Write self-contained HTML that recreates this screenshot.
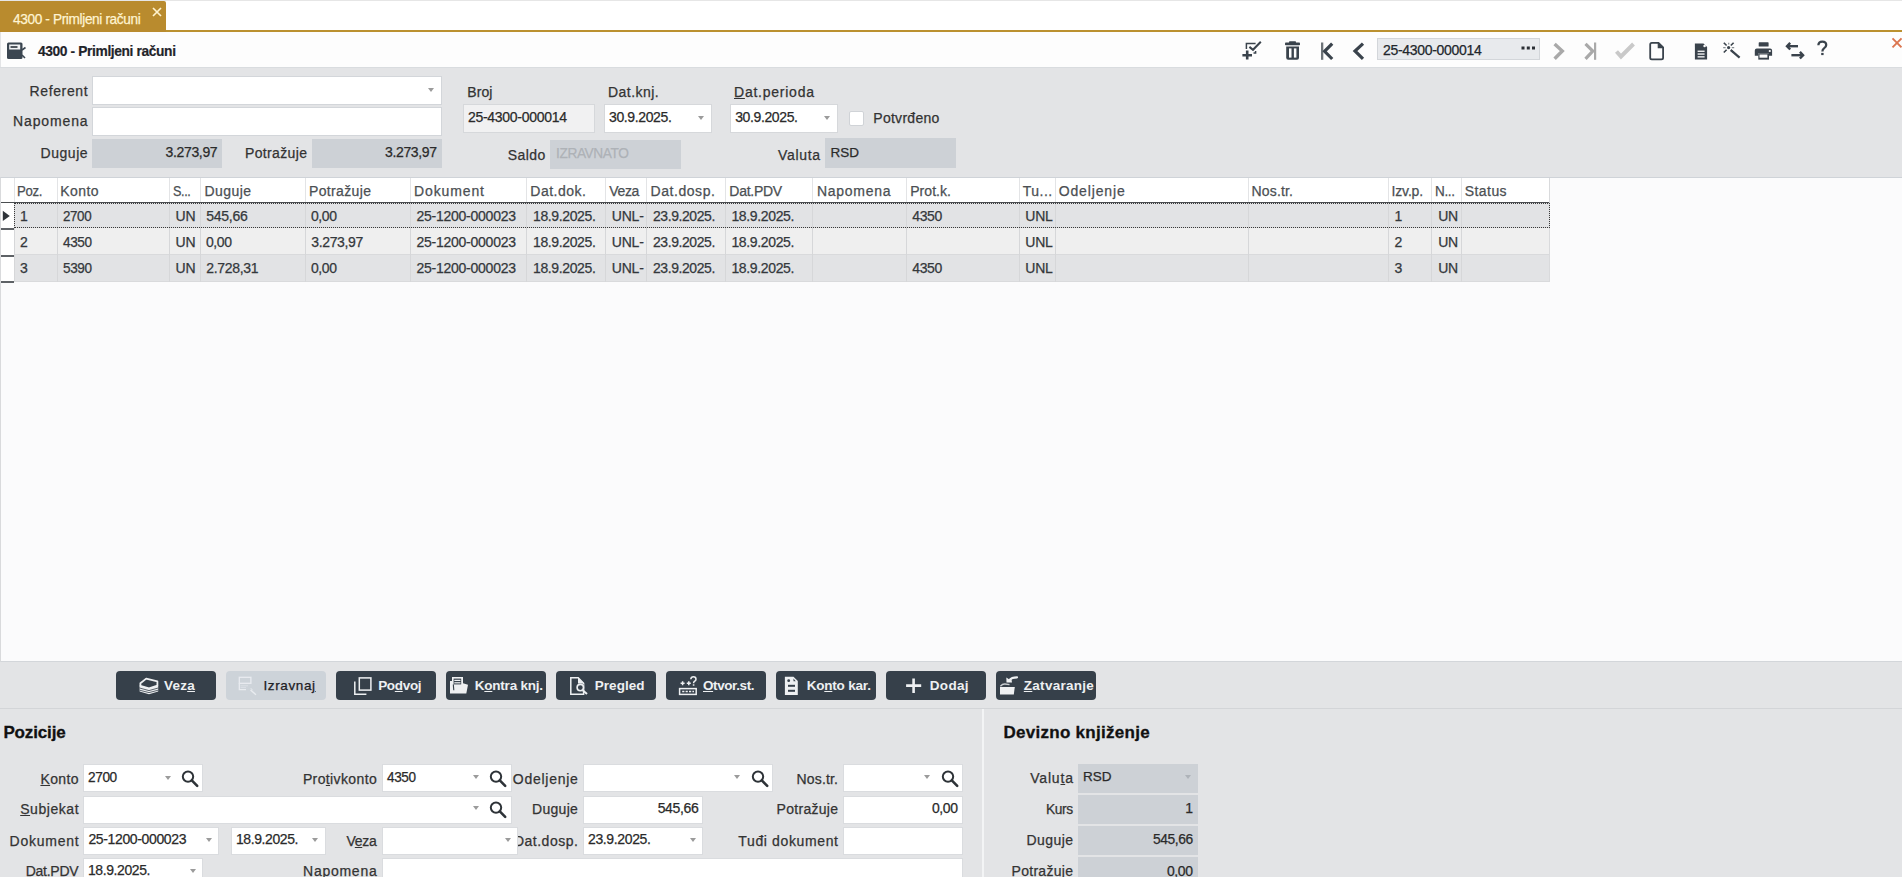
<!DOCTYPE html>
<html><head><meta charset="utf-8">
<style>
*{box-sizing:border-box;margin:0;padding:0}
html,body{width:1902px;height:877px;overflow:hidden}
body{background:#e3e4e6;font-family:"Liberation Sans",sans-serif;color:#333;position:relative}
.a{position:absolute}
.t{position:absolute;white-space:nowrap;line-height:1;font-family:"Liberation Sans",sans-serif;-webkit-text-stroke:0.25px currentColor}
svg{position:absolute;overflow:visible}
</style></head><body>
<div class="a" style="left:0px;top:0px;width:1902px;height:30px;background:#ffffff;border-top:1px solid #e6e6e6"></div>
<div class="a" style="left:0px;top:30px;width:1902px;height:2px;background:#bb9130;"></div>
<div class="a" style="left:0px;top:1px;width:166px;height:31px;background:#b98b2e;border-radius:0 2px 0 0"></div>
<svg style="left:152px;top:6.5px;" width="10" height="10" viewBox="0 0 10 10"><path d="M1 1L9 9M9 1L1 9" stroke="#fff2cc" stroke-width="1.7"/></svg>
<div class="a" style="left:1px;top:32px;width:1901px;height:35px;background:#fdfdfd;"></div>
<div class="a" style="left:0px;top:32px;width:1px;height:35px;background:#e3e4e6;"></div>
<div class="a" style="left:0px;top:67px;width:1902px;height:1px;background:#d9dcdf;"></div>
<svg style="left:6px;top:41px;" width="21" height="19" viewBox="0 0 21 19"><rect x="1" y="1.5" width="15.5" height="16.5" rx="1.5" fill="#3b4651"/><rect x="3.2" y="3.5" width="11" height="5" fill="#f2f4f6"/><rect x="4.5" y="5.2" width="7" height="1.6" fill="#2a323a"/><path d="M16 9L19.5 6.5M16 14L19 17" stroke="#3b4651" stroke-width="1.6"/></svg>
<svg style="left:1240px;top:40px;" width="24" height="21" viewBox="0 0 24 21"><path d="M2.4 15.2H12M7.2 10.6V19.4" stroke="#3a434c" stroke-width="2.6"/><path d="M6.4 9V3.6H15.6" fill="none" stroke="#3a434c" stroke-width="1.5"/><path d="M15.6 11V13.1H13.5" fill="none" stroke="#3a434c" stroke-width="1.5"/><path d="M9.4 6.9L13 9.8L20.8 1.7" fill="none" stroke="#3a434c" stroke-width="2"/></svg>
<svg style="left:1284px;top:40px;" width="17" height="21" viewBox="0 0 17 21"><rect x="1" y="2.6" width="15" height="2.6" rx="0.8" fill="#3a434c"/><rect x="5" y="1.3" width="7" height="2" rx="0.8" fill="#3a434c"/><path d="M2.2 6.5H15V17.8Q15 19.8 13 19.8H4.2Q2.2 19.8 2.2 17.8Z" fill="#3a434c"/><rect x="5" y="8.4" width="2.5" height="9.2" fill="#fdfdfd"/><rect x="9.9" y="8.4" width="2.5" height="9.2" fill="#fdfdfd"/></svg>
<svg style="left:1318px;top:40px;" width="18" height="22" viewBox="0 0 18 22"><rect x="3" y="2.5" width="2.3" height="17.3" fill="#6d7378"/><path d="M14.2 3.6L6.6 11.3L14.2 19" fill="none" stroke="#3a434c" stroke-width="3.2"/></svg>
<svg style="left:1350px;top:40px;" width="16" height="22" viewBox="0 0 16 22"><path d="M13 3.6L5 11L13 18.8" fill="none" stroke="#3a434c" stroke-width="3.2"/></svg>
<div class="a" style="left:1377px;top:38px;width:163px;height:22px;background:#e8eaed;border:1px solid #d3d6da"></div>
<svg style="left:1521px;top:46px;" width="15" height="4" viewBox="0 0 15 4"><rect x="0.5" y="0.5" width="3" height="3" fill="#2a2f35"/><rect x="5.8" y="0.5" width="3" height="3" fill="#2a2f35"/><rect x="11" y="0.5" width="3" height="3" fill="#2a2f35"/></svg>
<svg style="left:1550px;top:40px;" width="16" height="22" viewBox="0 0 16 22"><path d="M4.6 3.9L12.3 11L4.6 18.8" fill="none" stroke="#a9a9a9" stroke-width="3.4"/></svg>
<svg style="left:1580px;top:40px;" width="18" height="22" viewBox="0 0 18 22"><path d="M5.5 3.9L12.8 11L5.5 18.8" fill="none" stroke="#a9a9a9" stroke-width="3.2"/><rect x="14" y="2.5" width="2.2" height="17.3" fill="#a9a9a9"/></svg>
<svg style="left:1612px;top:40px;" width="24" height="20" viewBox="0 0 24 20"><path d="M4.5 11.5L9 16.5L21.5 4" fill="none" stroke="#c9c9c9" stroke-width="4"/></svg>
<svg style="left:1647px;top:40px;" width="19" height="21" viewBox="0 0 19 21"><path d="M3.2 4.4Q3.2 2.8 4.8 2.8H11.5L16.1 7.4V17.8Q16.1 19.4 14.5 19.4H4.8Q3.2 19.4 3.2 17.8Z" fill="none" stroke="#3a434c" stroke-width="1.8"/><path d="M11.3 2.8V7.6H16" fill="#3a434c" stroke="#3a434c" stroke-width="1.2"/></svg>
<svg style="left:1693px;top:40px;" width="16" height="21" viewBox="0 0 16 21"><path d="M1.9 3.5H10.5L14.1 7.1V19.6H1.9Z" fill="#3a434c"/><circle cx="11.6" cy="6" r="1.3" fill="#fdfdfd"/><rect x="4.6" y="10.6" width="7" height="1.3" fill="#fdfdfd"/><rect x="4.6" y="13.4" width="7" height="1.3" fill="#fdfdfd"/><rect x="4.6" y="16.2" width="7" height="1.3" fill="#fdfdfd"/></svg>
<svg style="left:1720px;top:40px;" width="22" height="20" viewBox="0 0 22 20"><path d="M10.8 10.2L19.6 17.7" stroke="#3a434c" stroke-width="2.2"/><path d="M3.8 2.7L6.6 5.5M10.8 9.7L13.6 12.5M13.6 2.7L10.8 5.5M6.6 9.7L3.8 12.5" stroke="#3a434c" stroke-width="1.6"/><path d="M3.2 7.6H5.6M11.8 7.6H14.2M8.7 2.8V4.6" stroke="#3a434c" stroke-width="1.2" opacity="0.6"/><circle cx="8.6" cy="7.6" r="1.6" fill="#3a434c"/></svg>
<svg style="left:1753px;top:40px;" width="21" height="21" viewBox="0 0 21 21"><rect x="5.7" y="2.3" width="9.9" height="4.3" rx="0.6" fill="#3a434c"/><path d="M1.8 10.6Q1.8 8.6 3.8 8.6H17.1Q19.1 8.6 19.1 10.6V15.7H15.9V13.3H5.3V15.7H1.8Z" fill="#3a434c"/><circle cx="16.8" cy="11" r="1.1" fill="#fdfdfd"/><rect x="5.3" y="13.3" width="10.7" height="6.3" fill="#3a434c"/><rect x="6.5" y="14.5" width="7.9" height="3.2" fill="#fdfdfd"/></svg>
<svg style="left:1784px;top:40px;" width="22" height="20" viewBox="0 0 22 20"><path d="M3.4 6.2H14" stroke="#3a434c" stroke-width="2.4"/><path d="M6.2 2.9L3 6.2L6.2 9.5" fill="none" stroke="#3a434c" stroke-width="2.4"/><path d="M7.4 15.2H18.6" stroke="#3a434c" stroke-width="2.4"/><path d="M15.9 11.9L19.1 15.2L15.9 18.5" fill="none" stroke="#3a434c" stroke-width="2.4"/></svg>
<svg style="left:1815px;top:39px;" width="14" height="18" viewBox="0 0 14 18"><path d="M3.4 6.2Q3.4 2.6 7.3 2.6Q11.2 2.6 11.2 6Q11.2 8 9 9.4Q7.4 10.4 7.4 12.6" fill="none" stroke="#3a434c" stroke-width="2.3"/><rect x="6.2" y="13.9" width="2.4" height="2.2" fill="#3a434c"/></svg>
<svg style="left:1891px;top:37px;" width="11" height="11" viewBox="0 0 11 11"><path d="M1.5 1.3L10.5 10.3M10.5 1.3L1.5 10.3" stroke="#db7650" stroke-width="1.9"/></svg>
<div class="a" style="left:92px;top:76px;width:350px;height:29px;background:#fff;border:1px solid #d3d6da"></div>
<svg style="left:428.4px;top:88px;" width="6" height="4" viewBox="0 0 6 4"><path d="M0 0H6L3 4Z" fill="#9b9b9b"/></svg>
<div class="a" style="left:92px;top:107px;width:350px;height:29px;background:#fff;border:1px solid #d3d6da"></div>
<div class="a" style="left:92px;top:139px;width:130px;height:29px;background:#cdd1d6;"></div>
<div class="a" style="left:312px;top:139px;width:130px;height:29px;background:#cdd1d6;"></div>
<div class="a" style="left:463px;top:104px;width:132px;height:29px;background:#f1f1f2;border:1px solid #d6d8db"></div>
<div class="a" style="left:604px;top:104px;width:108px;height:29px;background:#fff;border:1px solid #d6d8db"></div>
<svg style="left:698px;top:116px;" width="6" height="4" viewBox="0 0 6 4"><path d="M0 0H6L3 4Z" fill="#9b9b9b"/></svg>
<div class="a" style="left:730px;top:104px;width:108px;height:29px;background:#fff;border:1px solid #d6d8db"></div>
<svg style="left:824.4px;top:116px;" width="6" height="4" viewBox="0 0 6 4"><path d="M0 0H6L3 4Z" fill="#9b9b9b"/></svg>
<div class="a" style="left:849px;top:111px;width:15px;height:15px;background:#fff;border:1px solid #d0d3d7;border-radius:2px"></div>
<div class="a" style="left:550px;top:140px;width:131px;height:29px;background:#cdd1d6;"></div>
<div class="a" style="left:825px;top:138px;width:131px;height:30px;background:#cdd1d6;"></div>
<div class="a" style="left:0px;top:177px;width:1902px;height:485px;background:#fbfbfc;border-left:1px solid #d9dadc;border-top:1px solid #cfd3d8;border-bottom:1px solid #d3d6da"></div>
<div class="a" style="left:1px;top:178px;width:1549px;height:24px;background:#ffffff;"></div>
<div class="a" style="left:14px;top:203px;width:1536px;height:25px;background:#e2e3e5;"></div>
<div class="a" style="left:14px;top:227px;width:1536px;height:1px;background:#d9dadc;"></div>
<div class="a" style="left:14px;top:228px;width:1536px;height:27px;background:#efefef;"></div>
<div class="a" style="left:14px;top:254px;width:1536px;height:1px;background:#d9dadc;"></div>
<div class="a" style="left:14px;top:255px;width:1536px;height:27px;background:#e2e3e5;"></div>
<div class="a" style="left:14px;top:281px;width:1536px;height:1px;background:#d9dadc;"></div>
<div class="a" style="left:1px;top:203px;width:13px;height:79px;background:#ffffff;"></div>
<div class="a" style="left:1px;top:228px;width:13px;height:2px;background:#5e6266;"></div>
<div class="a" style="left:1px;top:255px;width:13px;height:2px;background:#5e6266;"></div>
<div class="a" style="left:1px;top:281px;width:13px;height:2px;background:#5e6266;"></div>
<svg style="left:2px;top:210px;" width="9" height="12" viewBox="0 0 9 12"><path d="M0.8 0.8L7.8 5.9L0.8 11Z" fill="#2f3439"/></svg>
<div class="a" style="left:1px;top:202px;width:1549px;height:1px;background:#4a4d50;"></div>
<div class="a" style="left:14px;top:178px;width:1px;height:24px;background:#e3e4e6;"></div>
<div class="a" style="left:14px;top:203px;width:1px;height:79px;background:#d6d7d9;"></div>
<div class="a" style="left:57px;top:178px;width:1px;height:24px;background:#e3e4e6;"></div>
<div class="a" style="left:57px;top:203px;width:1px;height:79px;background:#d6d7d9;"></div>
<div class="a" style="left:169px;top:178px;width:1px;height:24px;background:#e3e4e6;"></div>
<div class="a" style="left:169px;top:203px;width:1px;height:79px;background:#d6d7d9;"></div>
<div class="a" style="left:200px;top:178px;width:1px;height:24px;background:#e3e4e6;"></div>
<div class="a" style="left:200px;top:203px;width:1px;height:79px;background:#d6d7d9;"></div>
<div class="a" style="left:305px;top:178px;width:1px;height:24px;background:#e3e4e6;"></div>
<div class="a" style="left:305px;top:203px;width:1px;height:79px;background:#d6d7d9;"></div>
<div class="a" style="left:410px;top:178px;width:1px;height:24px;background:#e3e4e6;"></div>
<div class="a" style="left:410px;top:203px;width:1px;height:79px;background:#d6d7d9;"></div>
<div class="a" style="left:526px;top:178px;width:1px;height:24px;background:#e3e4e6;"></div>
<div class="a" style="left:526px;top:203px;width:1px;height:79px;background:#d6d7d9;"></div>
<div class="a" style="left:605px;top:178px;width:1px;height:24px;background:#e3e4e6;"></div>
<div class="a" style="left:605px;top:203px;width:1px;height:79px;background:#d6d7d9;"></div>
<div class="a" style="left:646px;top:178px;width:1px;height:24px;background:#e3e4e6;"></div>
<div class="a" style="left:646px;top:203px;width:1px;height:79px;background:#d6d7d9;"></div>
<div class="a" style="left:725px;top:178px;width:1px;height:24px;background:#e3e4e6;"></div>
<div class="a" style="left:725px;top:203px;width:1px;height:79px;background:#d6d7d9;"></div>
<div class="a" style="left:812px;top:178px;width:1px;height:24px;background:#e3e4e6;"></div>
<div class="a" style="left:812px;top:203px;width:1px;height:79px;background:#d6d7d9;"></div>
<div class="a" style="left:906px;top:178px;width:1px;height:24px;background:#e3e4e6;"></div>
<div class="a" style="left:906px;top:203px;width:1px;height:79px;background:#d6d7d9;"></div>
<div class="a" style="left:1019px;top:178px;width:1px;height:24px;background:#e3e4e6;"></div>
<div class="a" style="left:1019px;top:203px;width:1px;height:79px;background:#d6d7d9;"></div>
<div class="a" style="left:1055px;top:178px;width:1px;height:24px;background:#e3e4e6;"></div>
<div class="a" style="left:1055px;top:203px;width:1px;height:79px;background:#d6d7d9;"></div>
<div class="a" style="left:1248px;top:178px;width:1px;height:24px;background:#e3e4e6;"></div>
<div class="a" style="left:1248px;top:203px;width:1px;height:79px;background:#d6d7d9;"></div>
<div class="a" style="left:1388px;top:178px;width:1px;height:24px;background:#e3e4e6;"></div>
<div class="a" style="left:1388px;top:203px;width:1px;height:79px;background:#d6d7d9;"></div>
<div class="a" style="left:1431px;top:178px;width:1px;height:24px;background:#e3e4e6;"></div>
<div class="a" style="left:1431px;top:203px;width:1px;height:79px;background:#d6d7d9;"></div>
<div class="a" style="left:1461px;top:178px;width:1px;height:24px;background:#e3e4e6;"></div>
<div class="a" style="left:1461px;top:203px;width:1px;height:79px;background:#d6d7d9;"></div>
<div class="a" style="left:1549px;top:178px;width:1px;height:104px;background:#d9dadc;"></div>
<div class="a" style="left:14px;top:203px;width:1536px;height:25px;border:1px dotted #3a3a3a"></div>
<div class="a" style="left:116px;top:671px;width:100px;height:29px;background:#36404a;border-radius:4px"></div>
<div class="a" style="left:226px;top:671px;width:100px;height:29px;background:#cdd3d9;border-radius:4px"></div>
<div class="a" style="left:336px;top:671px;width:100px;height:29px;background:#36404a;border-radius:4px"></div>
<div class="a" style="left:446px;top:671px;width:100px;height:29px;background:#36404a;border-radius:4px"></div>
<div class="a" style="left:556px;top:671px;width:100px;height:29px;background:#36404a;border-radius:4px"></div>
<div class="a" style="left:666px;top:671px;width:100px;height:29px;background:#36404a;border-radius:4px"></div>
<div class="a" style="left:776px;top:671px;width:100px;height:29px;background:#36404a;border-radius:4px"></div>
<div class="a" style="left:886px;top:671px;width:100px;height:29px;background:#36404a;border-radius:4px"></div>
<div class="a" style="left:996px;top:671px;width:100px;height:29px;background:#36404a;border-radius:4px"></div>
<div class="a" style="left:0px;top:708px;width:1902px;height:1px;background:#d3d5d8;"></div>
<div class="a" style="left:982px;top:709px;width:2px;height:168px;background:#f3f4f5;"></div>
<div class="a" style="left:83px;top:764px;width:120px;height:28px;background:#fff;border:1px solid #dadcdf"></div>
<svg style="left:164.7px;top:776px;" width="6" height="4" viewBox="0 0 6 4"><path d="M0 0H6L3 4Z" fill="#9b9b9b"/></svg>
<svg style="left:181px;top:770px;" width="18" height="17" viewBox="0 0 18 17"><circle cx="7" cy="6.6" r="5.2" fill="none" stroke="#2e3338" stroke-width="2"/><path d="M10.8 10.4L16.2 15.8" stroke="#2e3338" stroke-width="2.6" stroke-linecap="round"/></svg>
<div class="a" style="left:83px;top:796px;width:429px;height:28px;background:#fff;border:1px solid #dadcdf;z-index:1"></div>
<svg style="left:473px;top:806px;z-index:1" width="6" height="4" viewBox="0 0 6 4"><path d="M0 0H6L3 4Z" fill="#9b9b9b"/></svg>
<svg style="left:489px;top:801px;z-index:1" width="18" height="17" viewBox="0 0 18 17"><circle cx="7" cy="6.6" r="5.2" fill="none" stroke="#2e3338" stroke-width="2"/><path d="M10.8 10.4L16.2 15.8" stroke="#2e3338" stroke-width="2.6" stroke-linecap="round"/></svg>
<div class="a" style="left:83px;top:827px;width:136px;height:28px;background:#fff;border:1px solid #dadcdf"></div>
<svg style="left:205.8px;top:838px;" width="6" height="4" viewBox="0 0 6 4"><path d="M0 0H6L3 4Z" fill="#9b9b9b"/></svg>
<div class="a" style="left:231px;top:827px;width:95px;height:28px;background:#fff;border:1px solid #dadcdf"></div>
<svg style="left:312px;top:838px;" width="6" height="4" viewBox="0 0 6 4"><path d="M0 0H6L3 4Z" fill="#9b9b9b"/></svg>
<div class="a" style="left:83px;top:858px;width:120px;height:28px;background:#fff;border:1px solid #dadcdf"></div>
<svg style="left:189.7px;top:868.5px;" width="6" height="4" viewBox="0 0 6 4"><path d="M0 0H6L3 4Z" fill="#9b9b9b"/></svg>
<div class="a" style="left:382px;top:764px;width:130px;height:28px;background:#fff;border:1px solid #dadcdf;z-index:1"></div>
<svg style="left:473px;top:775px;z-index:1" width="6" height="4" viewBox="0 0 6 4"><path d="M0 0H6L3 4Z" fill="#9b9b9b"/></svg>
<svg style="left:489px;top:770px;z-index:1" width="18" height="17" viewBox="0 0 18 17"><circle cx="7" cy="6.6" r="5.2" fill="none" stroke="#2e3338" stroke-width="2"/><path d="M10.8 10.4L16.2 15.8" stroke="#2e3338" stroke-width="2.6" stroke-linecap="round"/></svg>
<div class="a" style="left:382px;top:827px;width:136px;height:28px;background:#fff;border:1px solid #dadcdf;z-index:1"></div>
<svg style="left:504.7px;top:838px;z-index:1" width="6" height="4" viewBox="0 0 6 4"><path d="M0 0H6L3 4Z" fill="#9b9b9b"/></svg>
<div class="a" style="left:382px;top:858px;width:581px;height:28px;background:#fff;border:1px solid #dadcdf"></div>
<div class="a" style="left:583px;top:764px;width:190px;height:28px;background:#fff;border:1px solid #dadcdf"></div>
<svg style="left:734px;top:775px;" width="6" height="4" viewBox="0 0 6 4"><path d="M0 0H6L3 4Z" fill="#9b9b9b"/></svg>
<svg style="left:751px;top:770px;" width="18" height="17" viewBox="0 0 18 17"><circle cx="7" cy="6.6" r="5.2" fill="none" stroke="#2e3338" stroke-width="2"/><path d="M10.8 10.4L16.2 15.8" stroke="#2e3338" stroke-width="2.6" stroke-linecap="round"/></svg>
<div class="a" style="left:843px;top:764px;width:120px;height:28px;background:#fff;border:1px solid #dadcdf"></div>
<svg style="left:924px;top:775px;" width="6" height="4" viewBox="0 0 6 4"><path d="M0 0H6L3 4Z" fill="#9b9b9b"/></svg>
<svg style="left:941px;top:770px;" width="18" height="17" viewBox="0 0 18 17"><circle cx="7" cy="6.6" r="5.2" fill="none" stroke="#2e3338" stroke-width="2"/><path d="M10.8 10.4L16.2 15.8" stroke="#2e3338" stroke-width="2.6" stroke-linecap="round"/></svg>
<div class="a" style="left:583px;top:796px;width:120px;height:28px;background:#fff;border:1px solid #dadcdf"></div>
<div class="a" style="left:843px;top:796px;width:120px;height:28px;background:#fff;border:1px solid #dadcdf"></div>
<div class="a" style="left:583px;top:827px;width:120px;height:28px;background:#fff;border:1px solid #dadcdf"></div>
<svg style="left:689.5px;top:838px;" width="6" height="4" viewBox="0 0 6 4"><path d="M0 0H6L3 4Z" fill="#9b9b9b"/></svg>
<div class="a" style="left:843px;top:827px;width:120px;height:28px;background:#fff;border:1px solid #dadcdf"></div>
<div class="a" style="left:1078px;top:764px;width:120px;height:29px;background:#cdd1d6;"></div>
<svg style="left:1184.5px;top:775.2px;" width="6" height="4" viewBox="0 0 6 4"><path d="M0 0H6L3 4Z" fill="#aeb3b9"/></svg>
<div class="a" style="left:1078px;top:795px;width:120px;height:29px;background:#cdd1d6;"></div>
<div class="a" style="left:1078px;top:826px;width:120px;height:29px;background:#cdd1d6;"></div>
<div class="a" style="left:1078px;top:857px;width:120px;height:29px;background:#cdd1d6;"></div>
<svg style="left:138px;top:676px;" width="22" height="19" viewBox="0 0 22 19"><path d="M2.4 7.2L8.2 2.6L19.4 5.4V9.6L11 12.3L2.4 9.9Z" fill="none" stroke="#eef0f2" stroke-width="1.8" stroke-linejoin="round"/><path d="M1.6 9.6L11 12.3L20.2 9.6V15.4L11 18.2L1.6 15.4Z" fill="#eef0f2"/><path d="M1.6 12L11 14.6L20.2 12M1.6 14.2L11 16.6L20.2 14.2" fill="none" stroke="#36404a" stroke-width="0.8"/></svg>
<svg style="left:236px;top:675px;" width="22" height="21" viewBox="0 0 22 21"><rect x="3.3" y="2.3" width="11.6" height="6" fill="none" stroke="#e9ecf0" stroke-width="1.3"/><path d="M3.3 8.3V14.6H10" fill="none" stroke="#e9ecf0" stroke-width="1.3"/><path d="M4.5 10.8H12M4.5 12.4H10" stroke="#dde1e6" stroke-width="0.9"/><path d="M14.5 15L20 19.8" stroke="#e9ecf0" stroke-width="1.4"/><path d="M14.8 13.2L16.5 15.2" stroke="#e9ecf0" stroke-width="1"/></svg>
<svg style="left:352px;top:675px;" width="22" height="22" viewBox="0 0 22 22"><rect x="7.3" y="2.9" width="11.6" height="12.2" fill="none" stroke="#eef0f2" stroke-width="1.5"/><path d="M2.8 6.4V19.2H14.4" fill="none" stroke="#eef0f2" stroke-width="1.5"/></svg>
<svg style="left:448px;top:675px;" width="22" height="21" viewBox="0 0 22 21"><path d="M2 6H4V2H15V8.2L20 9.8L18.3 18.5H2Z" fill="#eef0f2"/><rect x="5.6" y="3.6" width="7.6" height="5.8" fill="#36404a"/><rect x="6.3" y="4.8" width="6.2" height="1.2" fill="#eef0f2"/><rect x="6.3" y="7.2" width="6.2" height="1.2" fill="#eef0f2"/><path d="M5.3 9.4L5.8 15.2" stroke="#36404a" stroke-width="1.1"/></svg>
<svg style="left:568px;top:675px;" width="22" height="22" viewBox="0 0 22 22"><path d="M2.8 2.8H10.2L15.6 8.2V19.2H2.8Z" fill="none" stroke="#eef0f2" stroke-width="1.5"/><path d="M10 2.5L16 8.5H10Z" fill="#eef0f2"/><rect x="8.5" y="9" width="7" height="7" fill="#36404a"/><circle cx="12.3" cy="12.6" r="3.2" fill="none" stroke="#eef0f2" stroke-width="1.6"/><path d="M14.7 15.2L19 19" stroke="#eef0f2" stroke-width="2"/></svg>
<svg style="left:676px;top:675px;" width="22" height="22" viewBox="0 0 22 22"><path d="M4.6 8.2H8.6M6.6 6.2V10.2M10.8 8.2H14.8M12.8 6.2V10.2" stroke="#eef0f2" stroke-width="1.5"/><path d="M14.8 4.2Q15 1.8 17.4 1.8Q20 1.8 20 4.2Q20 5.6 18.4 6.4Q17.6 6.9 17.6 8.2" fill="none" stroke="#eef0f2" stroke-width="1.5"/><rect x="16.8" y="9.3" width="1.6" height="1.4" fill="#eef0f2"/><rect x="3.6" y="13.6" width="16.6" height="5.8" fill="none" stroke="#eef0f2" stroke-width="1.5"/><path d="M6.2 16.5H18" stroke="#eef0f2" stroke-width="1.4" stroke-dasharray="2.2 1.2"/></svg>
<svg style="left:782px;top:675px;" width="18" height="22" viewBox="0 0 18 22"><path d="M2.9 1.7H11.5L15.8 6V20H2.9Z" fill="#eef0f2"/><circle cx="6.7" cy="5.7" r="1.4" fill="#36404a"/><path d="M11.5 3.5L13.7 6.3H11.5Z" fill="#36404a"/><rect x="6" y="9.8" width="7" height="2" fill="#36404a"/><rect x="6" y="14.8" width="7" height="2" fill="#36404a"/></svg>
<svg style="left:904px;top:676px;" width="19" height="19" viewBox="0 0 19 19"><path d="M2.1 9.6H17.2M9.6 2.4V16.9" stroke="#eef0f2" stroke-width="2.6"/></svg>
<svg style="left:998px;top:675px;" width="21" height="21" viewBox="0 0 21 21"><path d="M2 12H16.8L15.8 19.6H2Z" fill="#eef0f2"/><path d="M2.4 11.2Q4.5 8.8 7 9L11.5 9.6" fill="none" stroke="#eef0f2" stroke-width="1.3" opacity="0.8"/><path d="M8.3 2.4L11 4.2L13.2 2.6L14 7.4H8.5Z" fill="#eef0f2"/><path d="M11.6 5.2Q13.5 2.3 19 2.3" fill="none" stroke="#eef0f2" stroke-width="2.2" stroke-linecap="round"/></svg>
<div class="t" style="left:12.60px;top:11.30px;font-size:15px;color:#fff4d2;letter-spacing:-0.400px;transform:scaleX(0.9100);transform-origin:0 0;">4300 - Primljeni računi</div>
<div class="t" style="left:38.00px;top:44.24px;font-size:14.6px;color:#1f242a;font-weight:700;letter-spacing:-0.400px;-webkit-text-stroke:0.2px #1f242a;transform:scaleX(0.9443);transform-origin:0 0;">4300 - Primljeni računi</div>
<div class="t" style="left:1383.00px;top:42.75px;font-size:14px;color:#22272c;letter-spacing:-0.305px;">25-4300-000014</div>
<div class="t" style="left:29.60px;top:83.95px;font-size:14px;color:#333;letter-spacing:0.614px;">Referent</div>
<div class="t" style="left:13.00px;top:114.15px;font-size:14px;color:#333;letter-spacing:0.871px;">Napomena</div>
<div class="t" style="left:40.60px;top:146.15px;font-size:14px;color:#333;letter-spacing:0.525px;">Duguje</div>
<div class="t" style="left:245.00px;top:146.15px;font-size:14px;color:#333;letter-spacing:0.355px;">Potražuje</div>
<div class="t" style="left:165.60px;top:145.15px;font-size:14px;color:#2a2a2a;letter-spacing:-0.357px;">3.273,97</div>
<div class="t" style="left:385.00px;top:145.15px;font-size:14px;color:#2a2a2a;letter-spacing:-0.357px;">3.273,97</div>
<div class="t" style="left:467.30px;top:85.35px;font-size:14px;color:#333;letter-spacing:0.065px;">Broj</div>
<div class="t" style="left:608.00px;top:85.35px;font-size:14px;color:#333;letter-spacing:0.462px;">Dat.knj.</div>
<div class="t" style="left:734.00px;top:85.35px;font-size:14px;color:#333;letter-spacing:0.761px;"><span style="text-decoration:underline">D</span>at.perioda</div>
<div class="t" style="left:467.90px;top:109.85px;font-size:14px;color:#2a2a2a;letter-spacing:-0.274px;">25-4300-000014</div>
<div class="t" style="left:609.00px;top:109.85px;font-size:14px;color:#2a2a2a;letter-spacing:-0.375px;">30.9.2025.</div>
<div class="t" style="left:735.20px;top:109.85px;font-size:14px;color:#2a2a2a;letter-spacing:-0.375px;">30.9.2025.</div>
<div class="t" style="left:873.30px;top:111.45px;font-size:14px;color:#333;letter-spacing:0.271px;">Potvrđeno</div>
<div class="t" style="left:507.80px;top:147.55px;font-size:14px;color:#333;letter-spacing:0.447px;">Saldo</div>
<div class="t" style="left:556.30px;top:146.35px;font-size:14px;color:#aeb2b7;letter-spacing:-0.400px;transform:scaleX(0.9786);transform-origin:0 0;">IZRAVNATO</div>
<div class="t" style="left:778.00px;top:147.55px;font-size:14px;color:#333;letter-spacing:0.666px;">Valuta</div>
<div class="t" style="left:830.40px;top:146.07px;font-size:13.5px;color:#2a2a2a;">RSD</div>
<div class="t" style="left:17.10px;top:184.15px;font-size:14px;color:#4b4f53;letter-spacing:-0.400px;transform:scaleX(0.9435);transform-origin:0 0;">Poz.</div>
<div class="t" style="left:60.20px;top:184.15px;font-size:14px;color:#4b4f53;letter-spacing:0.427px;">Konto</div>
<div class="t" style="left:173.10px;top:184.15px;font-size:14px;color:#4b4f53;letter-spacing:-0.400px;transform:scaleX(0.8983);transform-origin:0 0;">S...</div>
<div class="t" style="left:204.40px;top:184.15px;font-size:14px;color:#4b4f53;letter-spacing:0.445px;">Duguje</div>
<div class="t" style="left:309.00px;top:184.15px;font-size:14px;color:#4b4f53;letter-spacing:0.355px;">Potražuje</div>
<div class="t" style="left:414.00px;top:184.15px;font-size:14px;color:#4b4f53;letter-spacing:0.884px;">Dokument</div>
<div class="t" style="left:530.30px;top:184.15px;font-size:14px;color:#4b4f53;letter-spacing:0.508px;">Dat.dok.</div>
<div class="t" style="left:609.20px;top:184.15px;font-size:14px;color:#4b4f53;letter-spacing:-0.314px;">Veza</div>
<div class="t" style="left:650.50px;top:184.15px;font-size:14px;color:#4b4f53;letter-spacing:0.558px;">Dat.dosp.</div>
<div class="t" style="left:729.30px;top:184.15px;font-size:14px;color:#4b4f53;letter-spacing:-0.261px;">Dat.PDV</div>
<div class="t" style="left:816.90px;top:184.15px;font-size:14px;color:#4b4f53;letter-spacing:0.729px;">Napomena</div>
<div class="t" style="left:910.20px;top:184.15px;font-size:14px;color:#4b4f53;letter-spacing:0.055px;">Prot.k.</div>
<div class="t" style="left:1022.70px;top:184.15px;font-size:14px;color:#4b4f53;letter-spacing:0.500px;">Tu...</div>
<div class="t" style="left:1058.70px;top:184.15px;font-size:14px;color:#4b4f53;letter-spacing:0.855px;">Odeljenje</div>
<div class="t" style="left:1251.60px;top:184.15px;font-size:14px;color:#4b4f53;letter-spacing:0.139px;">Nos.tr.</div>
<div class="t" style="left:1391.60px;top:184.15px;font-size:14px;color:#4b4f53;letter-spacing:-0.184px;">Izv.p.</div>
<div class="t" style="left:1435.40px;top:184.15px;font-size:14px;color:#4b4f53;letter-spacing:-0.400px;transform:scaleX(0.9669);transform-origin:0 0;">N...</div>
<div class="t" style="left:1464.80px;top:184.15px;font-size:14px;color:#4b4f53;letter-spacing:0.419px;">Status</div>
<div class="t" style="left:20.00px;top:208.75px;font-size:14px;color:#34383c;">1</div>
<div class="t" style="left:63.30px;top:208.75px;font-size:14px;color:#34383c;letter-spacing:-0.400px;transform:scaleX(0.9547);transform-origin:0 0;">2700</div>
<div class="t" style="left:175.60px;top:208.75px;font-size:14px;color:#34383c;letter-spacing:-0.300px;">UN</div>
<div class="t" style="left:206.30px;top:208.75px;font-size:14px;color:#34383c;letter-spacing:-0.286px;">545,66</div>
<div class="t" style="left:311.30px;top:208.75px;font-size:14px;color:#34383c;letter-spacing:-0.400px;transform:scaleX(0.9981);transform-origin:0 0;">0,00</div>
<div class="t" style="left:416.50px;top:208.75px;font-size:14px;color:#34383c;letter-spacing:-0.251px;">25-1200-000023</div>
<div class="t" style="left:533.00px;top:208.75px;font-size:14px;color:#34383c;letter-spacing:-0.375px;">18.9.2025.</div>
<div class="t" style="left:611.80px;top:208.75px;font-size:14px;color:#34383c;letter-spacing:-0.200px;">UNL-</div>
<div class="t" style="left:653.40px;top:208.75px;font-size:14px;color:#34383c;letter-spacing:-0.400px;transform:scaleX(0.9957);transform-origin:0 0;">23.9.2025.</div>
<div class="t" style="left:731.40px;top:208.75px;font-size:14px;color:#34383c;letter-spacing:-0.352px;">18.9.2025.</div>
<div class="t" style="left:912.30px;top:208.75px;font-size:14px;color:#34383c;letter-spacing:-0.385px;">4350</div>
<div class="t" style="left:1025.30px;top:208.75px;font-size:14px;color:#34383c;letter-spacing:-0.200px;">UNL</div>
<div class="t" style="left:1394.40px;top:208.75px;font-size:14px;color:#34383c;">1</div>
<div class="t" style="left:1438.20px;top:208.75px;font-size:14px;color:#34383c;letter-spacing:-0.300px;">UN</div>
<div class="t" style="left:20.00px;top:235.05px;font-size:14px;color:#34383c;">2</div>
<div class="t" style="left:63.30px;top:235.05px;font-size:14px;color:#34383c;letter-spacing:-0.400px;transform:scaleX(0.9681);transform-origin:0 0;">4350</div>
<div class="t" style="left:175.60px;top:235.05px;font-size:14px;color:#34383c;letter-spacing:-0.300px;">UN</div>
<div class="t" style="left:206.30px;top:235.05px;font-size:14px;color:#34383c;letter-spacing:-0.400px;transform:scaleX(0.9981);transform-origin:0 0;">0,00</div>
<div class="t" style="left:311.30px;top:235.05px;font-size:14px;color:#34383c;letter-spacing:-0.357px;">3.273,97</div>
<div class="t" style="left:416.50px;top:235.05px;font-size:14px;color:#34383c;letter-spacing:-0.251px;">25-1200-000023</div>
<div class="t" style="left:533.00px;top:235.05px;font-size:14px;color:#34383c;letter-spacing:-0.375px;">18.9.2025.</div>
<div class="t" style="left:611.80px;top:235.05px;font-size:14px;color:#34383c;letter-spacing:-0.200px;">UNL-</div>
<div class="t" style="left:653.40px;top:235.05px;font-size:14px;color:#34383c;letter-spacing:-0.400px;transform:scaleX(0.9957);transform-origin:0 0;">23.9.2025.</div>
<div class="t" style="left:731.40px;top:235.05px;font-size:14px;color:#34383c;letter-spacing:-0.352px;">18.9.2025.</div>
<div class="t" style="left:1025.30px;top:235.05px;font-size:14px;color:#34383c;letter-spacing:-0.200px;">UNL</div>
<div class="t" style="left:1394.40px;top:235.05px;font-size:14px;color:#34383c;">2</div>
<div class="t" style="left:1438.20px;top:235.05px;font-size:14px;color:#34383c;letter-spacing:-0.300px;">UN</div>
<div class="t" style="left:20.00px;top:261.45px;font-size:14px;color:#34383c;">3</div>
<div class="t" style="left:63.30px;top:261.45px;font-size:14px;color:#34383c;letter-spacing:-0.400px;transform:scaleX(0.9681);transform-origin:0 0;">5390</div>
<div class="t" style="left:175.60px;top:261.45px;font-size:14px;color:#34383c;letter-spacing:-0.300px;">UN</div>
<div class="t" style="left:206.30px;top:261.45px;font-size:14px;color:#34383c;letter-spacing:-0.329px;">2.728,31</div>
<div class="t" style="left:311.30px;top:261.45px;font-size:14px;color:#34383c;letter-spacing:-0.400px;transform:scaleX(0.9981);transform-origin:0 0;">0,00</div>
<div class="t" style="left:416.50px;top:261.45px;font-size:14px;color:#34383c;letter-spacing:-0.251px;">25-1200-000023</div>
<div class="t" style="left:533.00px;top:261.45px;font-size:14px;color:#34383c;letter-spacing:-0.375px;">18.9.2025.</div>
<div class="t" style="left:611.80px;top:261.45px;font-size:14px;color:#34383c;letter-spacing:-0.200px;">UNL-</div>
<div class="t" style="left:653.40px;top:261.45px;font-size:14px;color:#34383c;letter-spacing:-0.400px;transform:scaleX(0.9957);transform-origin:0 0;">23.9.2025.</div>
<div class="t" style="left:731.40px;top:261.45px;font-size:14px;color:#34383c;letter-spacing:-0.352px;">18.9.2025.</div>
<div class="t" style="left:912.30px;top:261.45px;font-size:14px;color:#34383c;letter-spacing:-0.385px;">4350</div>
<div class="t" style="left:1025.30px;top:261.45px;font-size:14px;color:#34383c;letter-spacing:-0.200px;">UNL</div>
<div class="t" style="left:1394.40px;top:261.45px;font-size:14px;color:#34383c;">3</div>
<div class="t" style="left:1438.20px;top:261.45px;font-size:14px;color:#34383c;letter-spacing:-0.300px;">UN</div>
<div class="t" style="left:164.00px;top:679.07px;font-size:13.5px;color:#eef0f2;font-weight:700;-webkit-text-stroke:0;letter-spacing:0.223px;">Vez<span style="text-decoration:underline">a</span></div>
<div class="t" style="left:378.20px;top:679.07px;font-size:13.5px;color:#eef0f2;font-weight:700;-webkit-text-stroke:0;letter-spacing:-0.323px;">Po<span style="text-decoration:underline">d</span>voj</div>
<div class="t" style="left:474.80px;top:679.07px;font-size:13.5px;color:#eef0f2;font-weight:700;-webkit-text-stroke:0;letter-spacing:-0.232px;">K<span style="text-decoration:underline">o</span>ntra knj.</div>
<div class="t" style="left:594.80px;top:679.07px;font-size:13.5px;color:#eef0f2;font-weight:700;-webkit-text-stroke:0;letter-spacing:0.028px;">Pre<span style="text-decoration:underline">g</span>led</div>
<div class="t" style="left:702.90px;top:679.07px;font-size:13.5px;color:#eef0f2;font-weight:700;-webkit-text-stroke:0;letter-spacing:-0.400px;transform:scaleX(0.9987);transform-origin:0 0;"><span style="text-decoration:underline">O</span>tvor.st.</div>
<div class="t" style="left:806.70px;top:679.07px;font-size:13.5px;color:#eef0f2;font-weight:700;-webkit-text-stroke:0;letter-spacing:-0.202px;">Ko<span style="text-decoration:underline">n</span>to kar.</div>
<div class="t" style="left:929.80px;top:679.07px;font-size:13.5px;color:#eef0f2;font-weight:700;-webkit-text-stroke:0;letter-spacing:0.321px;">Dodaj</div>
<div class="t" style="left:1023.80px;top:679.07px;font-size:13.5px;color:#eef0f2;font-weight:700;-webkit-text-stroke:0;letter-spacing:0.273px;"><span style="text-decoration:underline">Z</span>atvaranje</div>
<div class="t" style="left:263.50px;top:679.07px;font-size:13.5px;color:#1d2024;letter-spacing:0.603px;">Izravna<span style="text-decoration:underline">j</span></div>
<div class="t" style="left:3.40px;top:724.11px;font-size:17px;color:#111;font-weight:700;letter-spacing:-0.145px;-webkit-text-stroke:0.3px #111;">Pozicije</div>
<div class="t" style="left:40.40px;top:771.65px;font-size:14px;color:#333;letter-spacing:0.402px;"><span style="text-decoration:underline">K</span>onto</div>
<div class="t" style="left:20.20px;top:802.25px;font-size:14px;color:#333;letter-spacing:0.559px;"><span style="text-decoration:underline">S</span>ubjekat</div>
<div class="t" style="left:9.60px;top:833.65px;font-size:14px;color:#333;letter-spacing:0.741px;">Dokument</div>
<div class="t" style="left:25.70px;top:864.15px;font-size:14px;color:#333;letter-spacing:-0.261px;">Dat.PDV</div>
<div class="t" style="left:88.40px;top:769.85px;font-size:14px;color:#2a2a2a;letter-spacing:-0.400px;transform:scaleX(0.9748);transform-origin:0 0;">2700</div>
<div class="t" style="left:88.40px;top:831.55px;font-size:14px;color:#2a2a2a;letter-spacing:-0.359px;">25-1200-000023</div>
<div class="t" style="left:235.60px;top:831.55px;font-size:14px;color:#2a2a2a;letter-spacing:-0.400px;transform:scaleX(0.9973);transform-origin:0 0;">18.9.2025.</div>
<div class="t" style="left:88.40px;top:862.85px;font-size:14px;color:#2a2a2a;letter-spacing:-0.400px;transform:scaleX(0.9973);transform-origin:0 0;">18.9.2025.</div>
<div class="t" style="left:302.90px;top:771.65px;font-size:14px;color:#333;letter-spacing:0.375px;">Pro<span style="text-decoration:underline">t</span>ivkonto</div>
<div class="t" style="left:386.50px;top:769.85px;font-size:14px;color:#2a2a2a;letter-spacing:-0.400px;z-index:2;transform:scaleX(0.9681);transform-origin:0 0;">4350</div>
<div class="t" style="left:346.60px;top:833.65px;font-size:14px;color:#333;letter-spacing:-0.347px;">V<span style="text-decoration:underline">e</span>za</div>
<div class="t" style="left:303.10px;top:864.15px;font-size:14px;color:#333;letter-spacing:0.729px;">Napomena</div>
<div class="t" style="left:512.80px;top:771.95px;font-size:14px;color:#333;letter-spacing:0.743px;">Odeljenje</div>
<div class="t" style="left:796.60px;top:771.95px;font-size:14px;color:#333;letter-spacing:0.155px;">Nos.tr.</div>
<div class="t" style="left:532.00px;top:802.05px;font-size:14px;color:#333;letter-spacing:0.305px;">Duguje</div>
<div class="t" style="left:657.70px;top:800.65px;font-size:14px;color:#2a2a2a;letter-spacing:-0.366px;">545,66</div>
<div class="t" style="left:776.60px;top:802.05px;font-size:14px;color:#333;letter-spacing:0.280px;">Potražuje</div>
<div class="t" style="left:932.40px;top:800.65px;font-size:14px;color:#2a2a2a;letter-spacing:-0.400px;transform:scaleX(0.9981);transform-origin:0 0;">0,00</div>
<div class="t" style="left:513.90px;top:833.65px;font-size:14px;color:#333;letter-spacing:0.508px;">Dat.dosp.</div>
<div class="t" style="left:588.00px;top:831.55px;font-size:14px;color:#2a2a2a;letter-spacing:-0.364px;">23.9.2025.</div>
<div class="t" style="left:738.30px;top:833.65px;font-size:14px;color:#333;letter-spacing:0.634px;">Tuđi dokument</div>
<div class="t" style="left:1003.40px;top:723.91px;font-size:17px;color:#111;font-weight:700;letter-spacing:0.287px;-webkit-text-stroke:0.3px #111;">Devizno knjiženje</div>
<div class="t" style="left:1030.20px;top:770.85px;font-size:14px;color:#333;letter-spacing:0.826px;">Valu<span style="text-decoration:underline">t</span>a</div>
<div class="t" style="left:1045.80px;top:802.15px;font-size:14px;color:#333;letter-spacing:-0.400px;transform:scaleX(0.9856);transform-origin:0 0;">Kurs</div>
<div class="t" style="left:1026.60px;top:833.05px;font-size:14px;color:#333;letter-spacing:0.405px;">Duguje</div>
<div class="t" style="left:1011.50px;top:864.15px;font-size:14px;color:#333;letter-spacing:0.293px;">Potražuje</div>
<div class="t" style="left:1083.10px;top:770.27px;font-size:13.5px;color:#2a2a2a;">RSD</div>
<div class="t" style="left:1185.20px;top:801.15px;font-size:14px;color:#2a2a2a;">1</div>
<div class="t" style="left:1152.70px;top:832.15px;font-size:14px;color:#2a2a2a;letter-spacing:-0.400px;transform:scaleX(0.9871);transform-origin:0 0;">545,66</div>
<div class="t" style="left:1167.00px;top:864.15px;font-size:14px;color:#2a2a2a;letter-spacing:-0.400px;transform:scaleX(0.9981);transform-origin:0 0;">0,00</div>
</body></html>
